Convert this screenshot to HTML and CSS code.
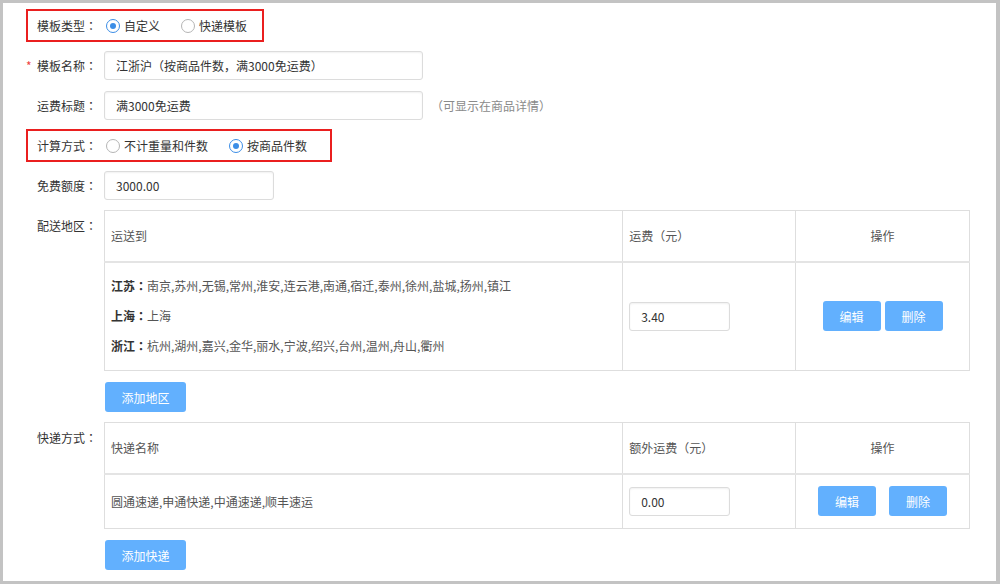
FILE: index.html
```html
<!DOCTYPE html>
<html lang="zh-CN">
<head>
  <meta charset="UTF-8" />
  <meta name="viewport" content="width=device-width, initial-scale=1.0"/>
  <title>运费模板</title>
  <link rel="stylesheet" href="styles.css">
</head>
<body>
  <div class="page">

    <div class="row hl hl-type">
      <div class="lbl">模板类型<span class="colon">：</span></div>
      <span class="radio on"></span><span class="opt">自定义</span>
      <span class="radio"></span><span class="opt">快递模板</span>
    </div>

    <div class="row">
      <div class="lbl"><span class="star">*</span>模板名称<span class="colon">：</span></div>
      <input class="ipt ipt-long" type="text" value="江浙沪（按商品件数，满3000免运费）">
    </div>

    <div class="row">
      <div class="lbl">运费标题<span class="colon">：</span></div>
      <input class="ipt ipt-long" type="text" value="满3000免运费">
      <span class="hint">（可显示在商品详情）</span>
    </div>

    <div class="row hl hl-calc">
      <div class="lbl">计算方式<span class="colon">：</span></div>
      <span class="radio"></span><span class="opt">不计重量和件数</span>
      <span class="radio on"></span><span class="opt">按商品件数</span>
    </div>

    <div class="row">
      <div class="lbl">免费额度<span class="colon">：</span></div>
      <input class="ipt ipt-mid" type="text" value="3000.00">
    </div>

    <!-- 配送地区 -->
    <div class="row row-top row-area">
      <div class="lbl lbl-top">配送地区<span class="colon">：</span></div>
      <table class="grid">
        <tr class="head">
          <th class="c1">运送到</th>
          <th class="c2">运费（元）</th>
          <th class="c3">操作</th>
        </tr>
        <tr class="area-body">
          <td class="c1">
            <p><b>江苏<span class="colon">：</span></b>南京,苏州,无锡,常州,淮安,连云港,南通,宿迁,泰州,徐州,盐城,扬州,镇江</p>
            <p><b>上海<span class="colon">：</span></b>上海</p>
            <p><b>浙江<span class="colon">：</span></b>杭州,湖州,嘉兴,金华,丽水,宁波,绍兴,台州,温州,舟山,衢州</p>
          </td>
          <td class="c2"><input class="ipt ipt-fee" type="text" value="3.40"></td>
          <td class="c3">
            <div class="ops">
              <button class="btn btn-sm">编辑</button>
              <button class="btn btn-sm">删除</button>
            </div>
          </td>
        </tr>
      </table>
    </div>

    <div class="row row-btn">
      <div class="lbl"></div>
      <button class="btn btn-add">添加地区</button>
    </div>

    <!-- 快递方式 -->
    <div class="row row-top row-express">
      <div class="lbl lbl-top">快递方式<span class="colon">：</span></div>
      <table class="grid">
        <tr class="head">
          <th class="c1">快递名称</th>
          <th class="c2">额外运费（元）</th>
          <th class="c3">操作</th>
        </tr>
        <tr class="express-body">
          <td class="c1">圆通速递,申通快递,中通速递,顺丰速运</td>
          <td class="c2"><input class="ipt ipt-fee" type="text" value="0.00"></td>
          <td class="c3">
            <div class="ops ops-wide">
              <button class="btn btn-sm">编辑</button>
              <button class="btn btn-sm">删除</button>
            </div>
          </td>
        </tr>
      </table>
    </div>

    <div class="row row-btn">
      <div class="lbl"></div>
      <button class="btn btn-add">添加快递</button>
    </div>

  </div>
</body>
</html>
```

FILE: styles.css
```css
* {
  box-sizing: border-box;
}
body {
  margin: 0;
  font-family: "Noto Sans CJK SC", "Liberation Sans", sans-serif;
  font-size: 12px;
  color: #333;
  background: #fff;
}
.page {
  width: 1000px;
  height: 584px;
  border: 3px solid #c3c3c3;
  border-right-width: 4px;
  padding-top: 6px;
  background: #fff;
  overflow: hidden;
}

/* form rows */
.row {
  display: flex;
  align-items: center;
  height: 33px;
  margin: 0 0 7px 23px;
  padding-left: 9px;
  border: 2px solid transparent;
}
.hl {
  border-color: #ea1f1f;
}
.hl-type {
  width: 238px;
}
.hl-calc {
  width: 306px;
}
.lbl {
  width: 67px;
  flex: none;
  line-height: 16px;
  color: #333;
  white-space: nowrap;
}
/* full-width colon sits in the middle of its cell */
.colon {
  display: inline-block;
  width: 12px;
  text-align: center;
  font-family: "Noto Sans CJK JP", "Noto Sans CJK SC", sans-serif;
}
.star {
  display: inline-block;
  width: 11px;
  margin-left: -11px;
  color: #e44;
}

/* radios */
.radio {
  width: 14px;
  height: 14px;
  margin-left: 2px;
  border: 1px solid #b5b5b5;
  border-radius: 50%;
  flex: none;
  display: flex;
  align-items: center;
  justify-content: center;
}
.radio.on {
  border-color: #3b8de6;
}
.radio.on::after {
  content: '';
  width: 6px;
  height: 6px;
  border-radius: 50%;
  background: #3b8de6;
}
.opt {
  margin-left: 4px;
  margin-right: 19px;
  line-height: 16px;
  white-space: nowrap;
}

/* inputs */
.ipt {
  height: 29px;
  padding: 0 11px;
  border: 1px solid #dcdcdc;
  border-radius: 3px;
  box-shadow: inset 0 1px 2px rgba(0,0,0,0.06);
  font-family: "Noto Sans CJK SC", "Liberation Sans", sans-serif;
  font-size: 12px;
  color: #333;
  outline: none;
}
.ipt-long {
  width: 319px;
}
.ipt-mid {
  width: 170px;
}
.ipt-fee {
  width: 101px;
}
.hint {
  margin-left: 8px;
  color: #8a8a8a;
}

/* table rows */
.row-top {
  align-items: flex-start;
  height: auto;
  border-top: 0;
  border-bottom: 0;
  margin-bottom: 0;
}
.row-area {
  margin-top: 8px;
}
.row-express {
  margin-top: 10px;
}
.lbl-top {
  padding-top: 8px;
}
.row-btn {
  height: 30px;
  border-top: 0;
  border-bottom: 0;
  margin-top: 11px;
  margin-bottom: 0;
}

.grid {
  width: 866px;
  border-collapse: collapse;
  color: #555;
}
.grid th,
.grid td {
  border: 1px solid #dedede;
  padding: 0 6px;
  text-align: left;
  font-weight: normal;
  vertical-align: middle;
}
.grid .head th {
  height: 51px;
  border-bottom: 2px solid #e4e4e4;
}
.grid .c1 {
  width: 519px;
}
.grid .c2 {
  width: 173px;
}
.grid .c3 {
  width: 174px;
  text-align: center;
}
.grid .c3 .ops {
  justify-content: center;
}
.area-body td {
  height: 109px;
}
.express-body td {
  height: 55px;
}
.grid p {
  margin: 0;
  line-height: 30px;
}
.grid b {
  color: #333;
  font-weight: bold;
}

/* buttons */
.ops {
  display: flex;
  gap: 4px;
}
.ops-wide {
  gap: 13px;
}
.btn {
  background: #62b0fe;
  color: #fff;
  border: none;
  border-radius: 3px;
  font-family: "Noto Sans CJK SC", "Liberation Sans", sans-serif;
  font-size: 12px;
  cursor: pointer;
}
.btn-sm {
  width: 58px;
  height: 30px;
}
.btn-add {
  width: 81px;
  height: 30px;
  margin-left: 1px;
}
```
